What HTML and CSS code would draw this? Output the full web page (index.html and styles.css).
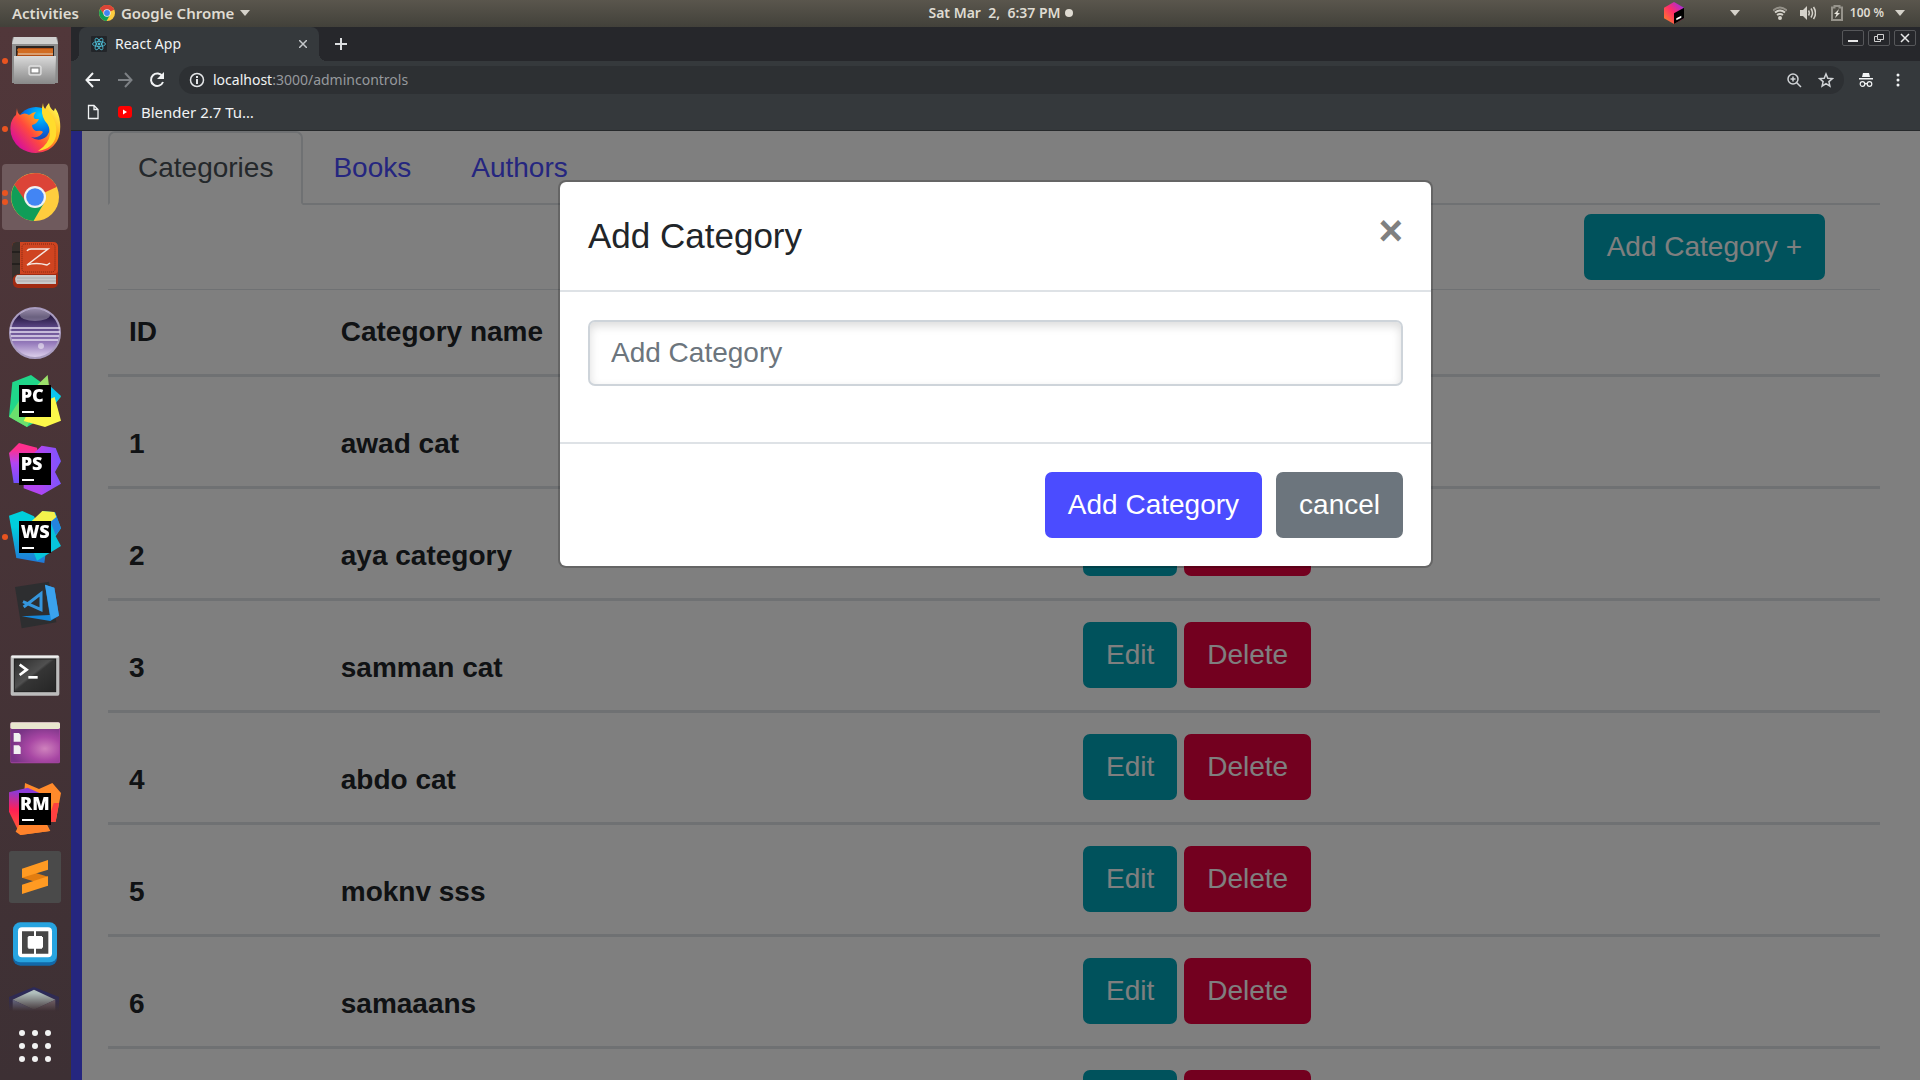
FILE: index.html
```html
<!DOCTYPE html>
<html lang="en">
<head>
<meta charset="utf-8">
<title>React App</title>
<link rel="stylesheet" href="styles.css">
</head>
<body>
<header class="topbar">
  <div class="topbar-group">
    <button class="topbar-item" type="button">Activities</button>
    <button class="topbar-item app-menu" type="button">
      <svg width="16" height="16" viewBox="0 0 48 48" aria-hidden="true"><use href="#chrome-logo"/></svg>
      Google Chrome
      <svg width="10" height="6" viewBox="0 0 10 6" aria-hidden="true"><path d="M0 0h10L5 6z" fill="#d5d2ca"/></svg>
    </button>
  </div>
  <div class="clock"><span>Sat Mar&nbsp; 2,&nbsp; 6:37 PM</span><span class="clock-dot"></span></div>
  <div class="topbar-group topbar-status">
    <svg class="toolbox" width="20" height="22" viewBox="0 0 60 66" aria-hidden="true">
      <defs><linearGradient id="tb1" x1="0" y1="1" x2="1" y2="0"><stop offset="0" stop-color="#ff8a1e"/><stop offset=".5" stop-color="#ff2d6a"/><stop offset="1" stop-color="#8a2cff"/></linearGradient></defs>
      <path d="M30 0l30 17v32L30 66 0 49V17z" fill="url(#tb1)"/><path d="M30 34l30-17v32L30 66z" fill="#000"/><path d="M37 49l15-8v6l-15 8z" fill="#fff"/>
    </svg>
    <svg class="toolbox-caret" width="10" height="6" viewBox="0 0 10 6" aria-hidden="true"><path d="M0 0h10L5 6z" fill="#d5d2ca"/></svg>
    <svg class="wifi" width="14" height="14" viewBox="0 0 14 14" fill="none" stroke="#d5d2ca" stroke-width="2" aria-hidden="true"><path d="M0 4.500Q7-1.500 14 4.500" opacity=".5"/><path d="M2 6.500Q7 2.500 12 6.500M4 9Q7 7 10 9"/><circle cx="7" cy="12" r="1" /></svg>
    <svg class="volume" width="16" height="14" viewBox="0 0 16 14" fill="none" stroke="#d5d2ca" stroke-width="1.500" aria-hidden="true"><path d="M0 4h3l4-4v14l-4-4H0z" fill="#d5d2ca" stroke="none"/><path d="M8.500 4.500q1.500 2.500 0 5M11 2.500q3 4.500 0 9M13.500 1q4 6 0 12"/></svg>
    <svg class="battery" width="12" height="16" viewBox="0 0 12 16" aria-hidden="true"><path d="M1 2.500h2.500V1h5v1.500H11V15H1z" fill="none" stroke="#96938b" stroke-width="2"/><path d="M8 4L3 9h2.500L4 13l5-5H6.500z" fill="#e5e2da"/></svg>
    <span class="battery-text">100 %</span>
    <svg width="10" height="6" viewBox="0 0 10 6" aria-hidden="true"><path d="M0 0h10L5 6z" fill="#d5d2ca"/></svg>
  </div>
</header>

<div class="desktop">
  <nav class="dock" aria-label="Dock">
    <div class="dock-list">
      <button class="dock-item" type="button" aria-label="Files"><span class="dock-dots"><i></i></span>
        <svg viewBox="0 0 52 52" aria-hidden="true">
          <defs><linearGradient id="f1" x1="0" y1="0" x2="0" y2="1"><stop offset="0" stop-color="#dadada"/><stop offset="1" stop-color="#888"/></linearGradient></defs>
          <path d="M4 2h44l1 4v42H3V6z" fill="#8d8d8d"/><path d="M5 2h42l2 7H3z" fill="#d0d0d0"/><path d="M7 11h38v11H7z" fill="#2a2422"/><path d="M9 13h35v8H8z" fill="#b34d12"/><path d="M8 15h36M9 17h35" stroke="#f08b32"/><path d="M9 19h35" stroke="#fff0d0"/><path d="M5 21h42l-1 28H5z" fill="url(#f1)"/><rect x="20" y="31" width="12" height="9" rx="1" fill="#bbb" stroke="#eee"/><rect x="22" y="33" width="8" height="5" fill="#fff" stroke="#777"/>
        </svg></button>
      <button class="dock-item" type="button" aria-label="Firefox"><span class="dock-dots"><i></i></span>
        <svg viewBox="0 0 52 52" aria-hidden="true">
          <defs><linearGradient id="ff1" x1=".9" y1=".1" x2=".1" y2=".8"><stop offset="0" stop-color="#fff44f"/><stop offset=".35" stop-color="#ffa71a"/><stop offset=".65" stop-color="#ff4a3d"/><stop offset="1" stop-color="#d8109a"/></linearGradient><radialGradient id="ff2" cx=".6" cy=".2" r=".8"><stop offset="0" stop-color="#00ccff"/><stop offset=".5" stop-color="#0070e8"/><stop offset="1" stop-color="#38207c"/></radialGradient></defs>
          <circle cx="27" cy="24" r="20" fill="url(#ff2)"/><path d="M8 5q0 5 3 7 5-3 9 0 4-3 7-3-4 5-1 7h4q-2 5-7 6 0 4 4 6 6-1 7 1-4 7-12 5 8 6 16-1 6-8-1-16-5-8 3-17 1 6 5 8l1-3q4 5 5 14 2 20-12 28-14 7-28-2Q-1 35 2 20 4 14 7 12z" fill="url(#ff1)"/><path d="M34 0q0 6 6 9 9 9 7 24-3 13-18 15 11-7 12-17 0-8-5-13-5-8-2-18z" fill="#ffdc2d"/>
        </svg></button>
      <button class="dock-item active" type="button" aria-label="Google Chrome"><span class="dock-dots"><i></i><i></i></span>
        <svg viewBox="-2 -2 52 52" aria-hidden="true">
          <g id="chrome-logo"><circle cx="24" cy="24" r="24" fill="#fecd3e"/><path d="M24 24L3.200 12A24 24 0 0 1 45.500 14z" fill="#dc4437"/><path d="M24 14h21.700A24 24 0 0 0 3.500 12L15 30z" fill="#dc4437"/><path d="M3.500 12A24 24 0 0 0 22.500 48L33 30 15 29z" fill="#109d58"/><circle cx="24" cy="24" r="11" fill="#f1f1f1"/><circle cx="24" cy="24" r="8.800" fill="#4285f4"/></g>
        </svg></button>
      <button class="dock-item" type="button" aria-label="Dictionary">
        <svg viewBox="0 0 52 52" aria-hidden="true">
          <rect x="4" y="6" width="45" height="43" rx="5" fill="#a02b12"/><path d="M8 36h39v9H8q-4-5 0-9z" fill="#c9c9c9"/><path d="M8 39h39M8 42h39" stroke="#aaa"/><path d="M7 3h37q5 0 5 5v23q0 4-4 4H9q-6 0-6 6V8q0-5 4-5z" fill="#cf4420"/><path d="M7 3h4v32q-6 0-8 6V8q0-5 4-5z" fill="#38302c"/><path d="M3 13h8M3 25h8" stroke="#111"/><rect x="13" y="5" width="33" height="28" rx="3" fill="none" stroke="#7d2712" stroke-dasharray="1 1"/><path d="M18 12q1-2 4-2h17L18 26q9-3 20 0l3-2" fill="none" stroke="#f5e8e2" stroke-width="1.500"/>
        </svg></button>
      <button class="dock-item" type="button" aria-label="Eclipse">
        <svg viewBox="0 0 52 52" aria-hidden="true">
          <defs><linearGradient id="ec" x1="0" y1="0" x2="0" y2="1"><stop offset="0" stop-color="#6d5c88"/><stop offset=".18" stop-color="#2b1d48"/><stop offset=".4" stop-color="#5d4888"/><stop offset=".7" stop-color="#957abb"/><stop offset="1" stop-color="#e0d4ee"/></linearGradient></defs>
          <circle cx="26" cy="26" r="25" fill="url(#ec)" stroke="#a99cc0" stroke-width="2"/><ellipse cx="26" cy="8" rx="15" ry="6" fill="#fff" opacity=".3"/><path d="M1 21h50M1 25h50M2 29h48M3 33h46" stroke="#e4dcf0" stroke-width="1.500"/><circle cx="32" cy="39" r="3" fill="#fff" opacity=".5"/>
        </svg></button>
      <button class="dock-item" type="button" aria-label="PyCharm">
        <svg viewBox="0 0 156 156" aria-hidden="true">
          <path d="M0 125L10 22 66 0l90 65-50 60-52 31z" fill="#20d68a"/><path d="M85 30l31-30 6 50z" fill="#9be06a"/><path d="M120 30l36 33-30 40z" fill="#0cc6ee"/><path d="M0 125l32-50 34 55-12 26z" fill="#6be06d"/><path d="M44 138l20-40 73-32 19 71-48 19z" fill="#fcf84a"/><path d="M30 30h96v96H30z"/><path d="M39 108h36v6H39z" fill="#fff"/><text class="ide-mark" x="35" y="82">PC</text>
        </svg></button>
      <button class="dock-item" type="button" aria-label="PhpStorm">
        <svg viewBox="0 0 156 156" aria-hidden="true">
          <defs><linearGradient id="ps" x1="0" y1="0" x2="0" y2="1"><stop offset=".15" stop-color="#ff2f8e"/><stop offset=".5" stop-color="#b345f1"/><stop offset="1" stop-color="#7050ff"/></linearGradient><linearGradient id="ps2" x1="0" y1="0" x2="1" y2="0"><stop offset=".4" stop-color="#b345f1"/><stop offset="1" stop-color="#7a55ff"/></linearGradient></defs>
          <path d="M0 30L30 0l54 14 10 60-40 46H14z" fill="url(#ps)"/><path d="M44 60L98 8l42 7 16 40-18 32 18 35-58 34-54-20z" fill="url(#ps2)"/><path d="M30 30h96v96H30z"/><path d="M39 108h36v6H39z" fill="#fff"/><text class="ide-mark" x="35" y="82">PS</text>
        </svg></button>
      <button class="dock-item" type="button" aria-label="WebStorm"><span class="dock-dots"><i></i></span>
        <svg viewBox="0 0 156 156" aria-hidden="true">
          <defs><linearGradient id="ws" x1="0" y1="0" x2="0" y2="1"><stop offset=".3" stop-color="#00cfdc"/><stop offset="1" stop-color="#2277d8"/></linearGradient></defs>
          <path d="M0 14L40 0l35 16 39 80-8 60-84-15z" fill="url(#ws)"/><path d="M100 0l38 4 18 48-16 24 16 29-72 44-20-49z" fill="#07c5db"/><path d="M138 4l18 48-16 20-20-50z" fill="#2484df"/><path d="M66 32L100 0l36 3 6 15-24 20z" fill="#f4f24c"/><path d="M30 30h96v96H30z"/><path d="M39 108h36v6H39z" fill="#fff"/><text class="ide-mark" x="35" y="82">WS</text>
        </svg></button>
      <button class="dock-item" type="button" aria-label="Visual Studio Code">
        <svg viewBox="0 0 156 156" aria-hidden="true">
          <path d="M18 24L120 8l22 122-104 18z" fill="#2d2e30"/><path d="M108 17l28 9 14 84-26 16-86-14 84-4z" fill="#1687d9"/><path d="M108 17l28 9 14 84-24 12z" fill="#3ba2ee"/><path d="M42 68l54 24V44L44 84" fill="none" stroke="#3596dd" stroke-width="9"/>
        </svg></button>
      <button class="dock-item" type="button" aria-label="Terminal">
        <svg viewBox="0 0 156 156" aria-hidden="true">
          <defs><linearGradient id="tm" x1="0" y1="0" x2="1" y2="1"><stop offset="0" stop-color="#2b2b2b"/><stop offset=".45" stop-color="#505050"/><stop offset=".5" stop-color="#353535"/><stop offset="1" stop-color="#252525"/></linearGradient></defs>
          <rect x="5" y="25" width="146" height="121" rx="5" fill="#bcbcbc"/><rect x="7" y="26" width="142" height="6" rx="3" fill="#f0f0f0"/><rect x="16" y="36" width="124" height="98" fill="url(#tm)" stroke="#1b1b1b" stroke-width="3"/><path d="M32 53l21 15-21 16" fill="none" stroke="#fff" stroke-width="8"/><path d="M58 87h28v8H58z" fill="#fff"/>
        </svg></button>
      <button class="dock-item" type="button" aria-label="Show desktop">
        <svg viewBox="0 0 156 156" aria-hidden="true">
          <defs><radialGradient id="dk" cx=".7" cy=".6" r=".7"><stop offset="0" stop-color="#cf82bd"/><stop offset=".5" stop-color="#a847a4"/><stop offset="1" stop-color="#793486"/></radialGradient></defs>
          <rect x="4" y="22" width="149" height="123" rx="5" fill="#a343a0"/><rect x="6" y="40" width="145" height="102" fill="url(#dk)"/><rect x="4" y="22" width="149" height="20" rx="5" fill="#e9e6cf"/><path d="M14 54h16l5 6v20H14zM14 91h16l5 6v20H14z" fill="#f1f1f1"/>
        </svg></button>
      <button class="dock-item" type="button" aria-label="RubyMine">
        <svg viewBox="0 0 156 156" aria-hidden="true">
          <defs><linearGradient id="rm" x1=".5" y1="0" x2=".4" y2="1"><stop offset=".1" stop-color="#8a3ad8"/><stop offset=".5" stop-color="#ff1f55"/><stop offset="1" stop-color="#ff6a2b"/></linearGradient></defs>
          <path d="M48 0l42 18 40-18 26 30-16 86-30 0 14 28-90 12z" fill="#ff8a2b"/><path d="M134 60l16 0-10 56h-24z" fill="#ff4040"/><path d="M0 28l56-14 44 20-20 86-46 36L0 86z" fill="url(#rm)"/><path d="M30 126l-10 20 14 10 88-12-14-20z" fill="#ff822b"/><path d="M30 30h96v96H30z"/><path d="M39 108h36v6H39z" fill="#fff"/><text class="ide-mark" x="33" y="82">RM</text>
        </svg></button>
      <button class="dock-item" type="button" aria-label="Sublime Text">
        <svg viewBox="0 0 156 156" aria-hidden="true">
          <rect width="156" height="156" rx="8" fill="#4a4a4a"/><path d="M39 80l78 24V77L39 53z" fill="#e27d10"/><path d="M39 53l78-26v29L39 80zM39 101l78-25v28l-78 25z" fill="#ff9a22"/>
        </svg></button>
      <button class="dock-item" type="button" aria-label="Brackets">
        <svg viewBox="0 0 156 156" aria-hidden="true">
          <rect x="12" y="12" width="132" height="128" rx="22" fill="#1268a8"/><rect x="12" y="10" width="132" height="120" rx="22" fill="#27a4e0"/><rect x="27" y="25" width="102" height="90" rx="12" fill="#fff"/><path d="M39 37h36v14H58v38h17v15H39zM118 37H81v14h18v38H81v15h37z" fill="#474747"/>
          <path d="M56 54h46v32H56z" fill="#fff"/>
        </svg></button>
      <button class="dock-item" type="button" aria-label="VirtualBox">
        <svg viewBox="0 0 156 156" aria-hidden="true">
          <path d="M0 30L75 0l75 30v90H0z" fill="#2c2a59"/><path d="M75 8l64 30-64 30-64-30z" fill="#b1bfbd"/><path d="M11 38l64 30v80l-64-36z" fill="#7b84aa"/><path d="M139 38L75 68v80l64-36z" fill="#8d7b83"/>
        </svg></button>
    </div>
    <button class="dock-apps" type="button" aria-label="Show applications">
      <svg width="32" height="32" viewBox="0 0 32 32" fill="#f2f2f2" aria-hidden="true"><circle cx="3" cy="3" r="3"/><circle cx="16" cy="3" r="3"/><circle cx="29" cy="3" r="3"/><circle cx="3" cy="16" r="3"/><circle cx="16" cy="16" r="3"/><circle cx="29" cy="16" r="3"/><circle cx="3" cy="29" r="3"/><circle cx="16" cy="29" r="3"/><circle cx="29" cy="29" r="3"/></svg>
    </button>
  </nav>

  <div class="browser">
    <div class="tabstrip">
      <div class="browser-tab">
        <svg width="16" height="16" viewBox="0 0 16 16" fill="none" stroke="#4fc3dc" stroke-width=".800" aria-hidden="true"><rect width="16" height="16" rx="1" fill="#222529" stroke="none"/><ellipse cx="8" cy="8" rx="6.500" ry="2.500"/><ellipse cx="8" cy="8" rx="6.500" ry="2.500" transform="rotate(60 8 8)"/><ellipse cx="8" cy="8" rx="6.500" ry="2.500" transform="rotate(120 8 8)"/><circle cx="8" cy="8" r="1" fill="#4fc3dc"/></svg>
        <span class="browser-tab-title">React App</span>
        <button class="icon-button" type="button" aria-label="Close tab"><svg width="8" height="8" viewBox="0 0 8 8" stroke="#c4c7ca" stroke-width="1.500" aria-hidden="true"><path d="M0 0l8 8M8 0L0 8"/></svg></button>
      </div>
      <button class="icon-button new-tab" type="button" aria-label="New tab"><svg width="12" height="12" viewBox="0 0 12 12" stroke="#dcdee0" stroke-width="2" aria-hidden="true"><path d="M6 0v12M0 6h12"/></svg></button>
      <div class="window-controls">
        <button type="button" aria-label="Minimize"><svg width="10" height="10" viewBox="0 0 10 10" aria-hidden="true"><path d="M0 7h10v2H0z" fill="#e8e8e8"/></svg></button>
        <button type="button" aria-label="Restore"><svg width="10" height="10" viewBox="0 0 10 10" fill="none" stroke="#d0d0d0" aria-hidden="true"><path d="M3.500 1.500h6v5h-6zM3 3.500H.500v5h6V7"/></svg></button>
        <button type="button" aria-label="Close"><svg width="10" height="10" viewBox="0 0 10 10" stroke="#e8e8e8" stroke-width="1.500" aria-hidden="true"><path d="M1 1l8 8M9 1L1 9"/></svg></button>
      </div>
    </div>
    <div class="toolbar">
      <button class="icon-button" type="button" aria-label="Back"><svg width="16" height="16" viewBox="0 0 16 16" fill="none" stroke="#f1f3f4" stroke-width="2" aria-hidden="true"><path d="M15 8H2M8 1L1.500 8 8 15"/></svg></button>
      <button class="icon-button" type="button" aria-label="Forward"><svg width="16" height="16" viewBox="0 0 16 16" fill="none" stroke="#7d8185" stroke-width="2" aria-hidden="true"><path d="M1 8h13M8 1l6.500 7L8 15"/></svg></button>
      <button class="icon-button" type="button" aria-label="Reload"><svg width="16" height="16" viewBox="0 0 16 16" fill="none" stroke="#f1f3f4" stroke-width="2" aria-hidden="true"><path d="M13.500 4.500A6.200 6.200 0 1 0 14 10"/><path d="M15 0v7H8z" fill="#f1f3f4" stroke="none"/></svg></button>
      <div class="omnibox">
        <svg width="16" height="16" viewBox="0 0 16 16" fill="none" stroke="#e4e6e8" stroke-width="1.500" aria-hidden="true"><circle cx="8" cy="8" r="6.500"/><path d="M8 7v5M8 4v2" stroke-width="2"/></svg>
        <a class="url" href="#">localhost<span>:3000/admincontrols</span></a>
        <svg width="16" height="16" viewBox="0 0 16 16" fill="none" stroke="#d0d3d6" stroke-width="1.500" aria-hidden="true"><circle cx="7" cy="7" r="5"/><path d="M10.500 10.500L15 15M4.500 7h5M7 4.500v5"/></svg>
        <svg width="16" height="16" viewBox="0 0 16 16" fill="none" stroke="#d0d3d6" stroke-width="1.500" aria-hidden="true"><path d="M8 2l1.800 4.200 4.600.400-3.500 3 1 4.500L8 11.700l-3.900 2.400 1-4.500-3.500-3 4.600-.400z"/></svg>
      </div>
      <svg class="incognito" width="16" height="16" viewBox="0 0 16 16" fill="#f1f3f4" aria-hidden="true"><path d="M5 1h6l1 4H4zM1 6h14v1.500H1z"/><g fill="none" stroke="#f1f3f4" stroke-width="1.200"><circle cx="4.500" cy="12" r="2.300"/><circle cx="11.500" cy="12" r="2.300"/><path d="M7 12q1-1 2 0"/></g></svg>
      <button class="icon-button" type="button" aria-label="Menu"><svg width="16" height="16" viewBox="0 0 16 16" fill="#f1f3f4" aria-hidden="true"><circle cx="8" cy="3" r="1.500"/><circle cx="8" cy="8" r="1.500"/><circle cx="8" cy="13" r="1.500"/></svg></button>
    </div>
    <div class="bookmarks">
      <svg width="16" height="16" viewBox="0 0 16 16" fill="none" stroke="#f1f3f4" stroke-width="1.300" aria-hidden="true"><path d="M3.500 1.500h5.500l4 4v9H3.500zM9 1.500v4h4"/></svg>
      <svg width="16" height="16" viewBox="0 0 16 16" aria-hidden="true"><rect x="1" y="2" width="14" height="12" rx="3" fill="#f00"/><path d="M6 5.500l4 2.500-4 2.500z" fill="#fff"/></svg>
      <a href="#">Blender 2.7 Tu…</a>
    </div>

    <div class="viewport">
      <main class="page">
        <ul class="tabs">
          <li><a class="tab tab-active" href="#">Categories</a></li>
          <li><a class="tab" href="#">Books</a></li>
          <li><a class="tab" href="#">Authors</a></li>
        </ul>
        <div class="actions"><button class="btn btn-info" type="button">Add Category +</button></div>
        <table class="categories">
          <thead><tr><th class="col-id">ID</th><th class="col-name">Category name</th><th></th></tr></thead>
          <tbody>
            <tr><th>1</th><th>awad cat</th><td><div class="row-actions"><button class="btn btn-info" type="button">Edit</button><button class="btn btn-danger" type="button">Delete</button></div></td></tr>
            <tr><th>2</th><th>aya category</th><td><div class="row-actions"><button class="btn btn-info" type="button">Edit</button><button class="btn btn-danger" type="button">Delete</button></div></td></tr>
            <tr><th>3</th><th>samman cat</th><td><div class="row-actions"><button class="btn btn-info" type="button">Edit</button><button class="btn btn-danger" type="button">Delete</button></div></td></tr>
            <tr><th>4</th><th>abdo cat</th><td><div class="row-actions"><button class="btn btn-info" type="button">Edit</button><button class="btn btn-danger" type="button">Delete</button></div></td></tr>
            <tr><th>5</th><th>moknv sss</th><td><div class="row-actions"><button class="btn btn-info" type="button">Edit</button><button class="btn btn-danger" type="button">Delete</button></div></td></tr>
            <tr><th>6</th><th>samaaans</th><td><div class="row-actions"><button class="btn btn-info" type="button">Edit</button><button class="btn btn-danger" type="button">Delete</button></div></td></tr>
            <tr><th></th><th></th><td><div class="row-actions"><button class="btn btn-info" type="button" aria-label="Edit"></button><button class="btn btn-danger" type="button" aria-label="Delete"></button></div></td></tr>
          </tbody>
        </table>
      </main>
      <div class="backdrop">
        <form class="modal" role="dialog" aria-labelledby="modal-title">
          <div class="modal-header">
            <h1 id="modal-title">Add Category</h1>
            <button class="modal-close" type="button" aria-label="Close">×</button>
          </div>
          <div class="modal-body"><input class="field" type="text" placeholder="Add Category" aria-label="Add Category"></div>
          <div class="modal-footer">
            <button class="btn btn-primary" type="button">Add Category</button>
            <button class="btn btn-secondary" type="button">cancel</button>
          </div>
        </form>
      </div>
    </div>
  </div>
</div>
</body>
</html>
```
FILE: styles.css
```css
* { box-sizing: border-box; }

body {
  margin: 0;
  height: 100vh;
  display: flex;
  flex-direction: column;
  overflow: hidden;
  font-family: "Liberation Sans", Arial, sans-serif;
}

button, input { font: inherit; }
button { margin: 0; padding: 0; border: 0; background: none; color: inherit; }
a { text-decoration: none; }
svg { display: block; flex: none; }

/* Desktop top bar */
.topbar {
  flex: none;
  height: 27px;
  padding: 0 15px 1px 12px;
  display: grid;
  grid-template-columns: 1fr auto 1fr;
  align-items: center;
  background: linear-gradient(#5a564d, #42413a);
  color: #dfdbd2;
  font: 600 15px/20px "Noto Sans", sans-serif;
}
.topbar-group { display: flex; align-items: center; gap: 20px; }
.topbar-item { display: flex; align-items: center; }
.app-menu { gap: 6px; }
.clock { display: flex; align-items: center; gap: 4px; padding-left: 84px; font-size: 14px; }
.clock-dot { width: 8px; height: 8px; border-radius: 50%; background: #dfdbd2; }
.topbar-status { justify-content: flex-end; gap: 11px; }
.toolbox-caret { margin: 0 22px 0 35px; }
.wifi { margin-right: 2px; }
.volume { margin-right: 4px; }
.battery-text { font-size: 12px; margin-left: -4px; }

/* Dock */
.desktop { flex: 1; min-height: 0; display: flex; }
.dock {
  flex: none;
  width: 71px;
  display: flex;
  flex-direction: column;
  background: linear-gradient(#51373a, #3d3034);
}
.dock-list {
  flex: 1;
  min-height: 0;
  overflow: hidden;
  padding: 1px 3px 0 2px;
  display: flex;
  flex-direction: column;
  gap: 2px;
  mask-image: linear-gradient(#000, #000 calc(100% - 18px), transparent);
}
.dock-item {
  position: relative;
  flex: none;
  width: 66px;
  height: 66px;
  padding: 7px;
  border-radius: 4px;
}
.dock-item svg { width: 52px; height: 52px; }
.dock-item.active { background: #6f5a5d; }
.dock-dots {
  position: absolute;
  inset: 0 auto 0 0;
  display: flex;
  flex-direction: column;
  justify-content: center;
  gap: 3px;
}
.dock-dots i { width: 6px; height: 6px; border-radius: 50%; background: #e95420; }
.dock-apps { flex: none; height: 69px; padding-left: 19px; }
.ide-mark { font: 800 54px "Open Sans", sans-serif; fill: #fff; }

/* Browser chrome */
.browser {
  flex: 1;
  min-width: 0;
  display: flex;
  flex-direction: column;
  background: #35393c;
  color: #f1f3f4;
  font: 14px/20px "Noto Sans", sans-serif;
}
.tabstrip { flex: none; height: 34px; padding-left: 8px; display: flex; background: #26272b; }
.browser-tab {
  position: relative;
  width: 240px;
  padding: 0 8px 0 12px;
  display: flex;
  align-items: center;
  gap: 8px;
  border-radius: 8px 8px 0 0;
  background: #35393c;
}
.browser-tab::before, .browser-tab::after {
  content: "";
  position: absolute;
  bottom: 0;
  width: 8px;
  height: 8px;
}
.browser-tab::before { left: -8px; background: radial-gradient(circle at 0 0, transparent 8px, #35393c 8px); }
.browser-tab::after { right: -8px; background: radial-gradient(circle at 100% 0, transparent 8px, #35393c 8px); }
.browser-tab-title { flex: 1; }
.icon-button { width: 16px; display: flex; align-items: center; justify-content: center; }
.new-tab { margin-left: 14px; }
.window-controls { margin-left: auto; padding: 3px 4px; display: flex; gap: 4px; }
.window-controls button {
  width: 22px;
  height: 16px;
  display: flex;
  align-items: center;
  justify-content: center;
  border: 1px solid #56575a;
  border-radius: 2px;
}
.toolbar { flex: none; height: 38px; padding: 0 14px; display: flex; align-items: center; gap: 16px; }
.omnibox {
  flex: 1;
  height: 28px;
  margin-left: -2px;
  padding: 0 10px;
  display: flex;
  align-items: center;
  gap: 16px;
  border-radius: 14px;
  background: #2d3033;
}
.url { flex: 1; margin-left: -8px; color: #f1f3f4; }
.url span { color: #96999d; }
.incognito { margin-left: -2px; }
.bookmarks {
  flex: none;
  height: 32px;
  padding: 0 14px 6px;
  display: flex;
  align-items: center;
  gap: 16px;
  border-bottom: 1px solid #26292b;
}
.bookmarks a { margin-left: -8px; color: #f1f3f4; font-size: 15px; }

/* Admin page */
.viewport {
  position: relative;
  flex: 1;
  min-height: 0;
  overflow: hidden;
  background: #fff;
  color: #212529;
  font: 28px/42px "Liberation Sans", Arial, sans-serif;
}
.page { padding: 0 40px 0 26px; border-left: 11px solid #4b4cff; }
.tabs {
  display: flex;
  margin: 0;
  padding: 0;
  list-style: none;
  border-bottom: 2px solid #dee2e6;
}
.tab {
  display: block;
  margin-bottom: -2px;
  padding: 14px 28px;
  border: 2px solid transparent;
  border-radius: 7px 7px 0 0;
  color: #4b4cff;
}
.tab-active { border-color: #dee2e6 #dee2e6 #fff; background: #fff; color: #495057; }
.actions { display: flex; justify-content: flex-end; padding: 9px 55px 9px 0; }

.btn {
  min-height: 66px;
  padding: 10px 21px;
  border: 2px solid transparent;
  border-radius: 7px;
  color: #fff;
  line-height: 42px;
  white-space: nowrap;
}
.btn-info { background-color: #00a4b8; border-color: #00a4b8; }
.btn-danger { background-color: #e6003e; border-color: #e6003e; }
.btn-primary { background-color: #4b4cff; border-color: #4b4cff; }
.btn-secondary { background-color: #6c757d; border-color: #6c757d; }

.categories { width: 100%; border-spacing: 0; table-layout: fixed; }
.categories th, .categories td {
  padding: 21px;
  border-top: 3px solid #dee2e6;
  text-align: left;
  vertical-align: bottom;
}
.categories td { padding-bottom: 22px; }
.categories thead th { border-top-width: 1px; }
.col-id { width: 11.95%; }
.col-name { width: 41.9%; }
.row-actions { display: flex; gap: 7px; }
.row-actions .btn { padding-inline: 0; }
.row-actions .btn-info { width: 94px; }
.row-actions .btn-danger { width: 127px; }

/* Dialog */
.backdrop {
  position: absolute;
  inset: 0;
  padding: 49px 28px;
  background: rgba(0, 0, 0, .5);
}
.modal {
  max-width: 875px;
  margin: 0 auto;
  border: 2px solid rgba(0, 0, 0, .2);
  border-radius: 8px;
  background: #fff;
  background-clip: padding-box;
}
.modal-header {
  display: flex;
  justify-content: space-between;
  align-items: flex-start;
  padding: 28px;
  border-bottom: 2px solid #dee2e6;
}
.modal-header h1 { margin: 0; font-size: 35px; font-weight: 400; line-height: 52px; }
.modal-close { font-size: 42px; font-weight: 700; line-height: 42px; color: #808080; }
.modal-body { padding: 28px 28px 56px; }
.field {
  display: block;
  width: 100%;
  height: 66px;
  padding: 10px 21px;
  border: 2px solid #ced4da;
  border-radius: 7px;
  background: #fff;
  color: #495057;
  box-shadow: inset 0 4px 10px rgba(0, 0, 0, .14);
}
.field::placeholder { color: #6c757d; opacity: 1; }
.modal-footer {
  display: flex;
  justify-content: flex-end;
  gap: 14px;
  padding: 28px;
  border-top: 2px solid #dee2e6;
}
```
